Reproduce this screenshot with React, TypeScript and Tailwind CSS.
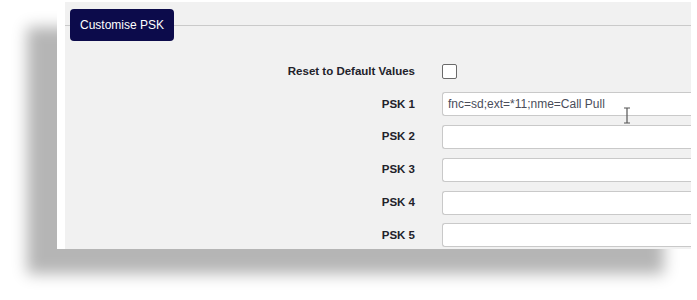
import React from "react";

const rows = [
  { label: "PSK 1", value: "fnc=sd;ext=*11;nme=Call Pull" },
  { label: "PSK 2", value: "" },
  { label: "PSK 3", value: "" },
  { label: "PSK 4", value: "" },
  { label: "PSK 5", value: "" },
];

export default function App() {
  return (
    <div
      className="w-[697px] h-[300px] bg-white overflow-hidden"
      style={{ fontFamily: '"Liberation Sans", Arial, sans-serif' }}
    >
      <div className="ml-[57px] mt-[2px] w-[637px] h-[247px] bg-[#f1f1f1] border-l-[8px] border-r-[3px] border-white shadow-[-30px_25px_14px_rgba(0,0,0,0.29)] relative overflow-hidden">
        {/* header */}
        <div className="flex items-center pt-[7px]">
          <div className="w-[5px] border-t border-[#cacaca]" />
          <div className="h-[32px] w-[104px] rounded-[4px] bg-[#0c0b4b] text-white text-[12px] flex items-center pl-[10px]">
            Customise PSK
          </div>
          <div className="flex-1 border-t border-[#cacaca]" />
        </div>

        {/* form */}
        <div className="flex flex-col gap-[8.75px] pt-[18.5px]">
          <div className="flex items-center h-[24px]">
            <div className="w-[350px] text-right text-[11.5px] font-bold text-[#22222a]">
              Reset to Default Values
            </div>
            <div className="ml-[27px] w-[15px] h-[15px] rounded-[2px] border-[1.5px] border-[#6a6a6a] bg-white" />
          </div>
          {rows.map((r) => (
            <div key={r.label} className="flex items-center h-[24px]">
              <div className="w-[350px] text-right text-[11.5px] font-bold text-[#22222a]">
                {r.label}
              </div>
              <div className="ml-[27px] flex-1 h-[24px] rounded-l-[3px] border border-r-0 border-[#c9c9c9] bg-white flex items-center pl-[5px] text-[12px] text-[#4a4d5a]">
                {r.value}
              </div>
            </div>
          ))}
        </div>

        {/* text cursor */}
        <svg
          className="absolute left-[558px] top-[105px]"
          width="8"
          height="17"
          viewBox="0 0 8 17"
        >
          <path
            d="M1 1h6M4 1v15M1 16h6"
            stroke="#555"
            strokeWidth="1.2"
            fill="none"
          />
        </svg>
      </div>
    </div>
  );
}
